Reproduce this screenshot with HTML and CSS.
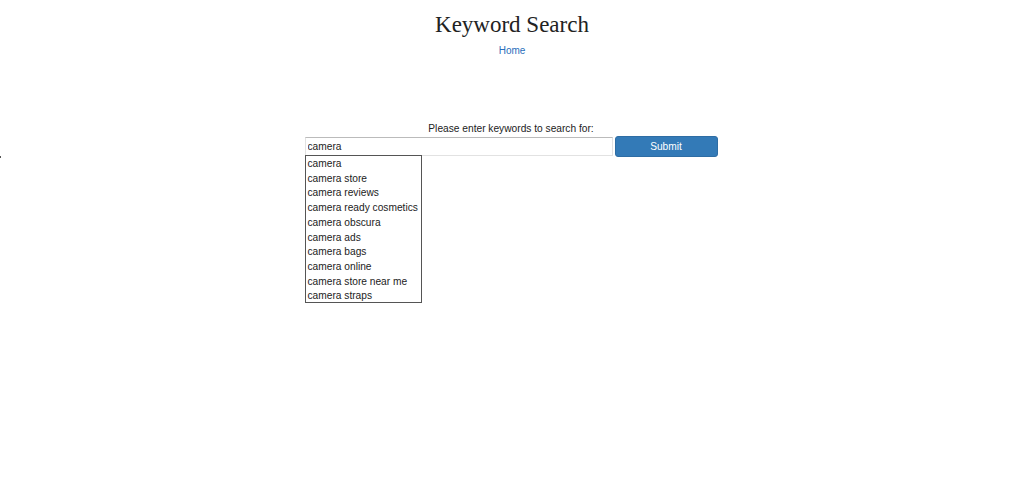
FILE: index.html
```html
<!DOCTYPE html>
<html>
<head>
<meta charset="utf-8">
<link rel="stylesheet" href="styles.css">
</head>
<body>
<span class="dot"></span>
<header class="head">
  <h1 class="title">Keyword Search</h1>
  <a class="home" href="#">Home</a>
</header>
<main class="search">
  <label class="label" for="kw">Please enter keywords to search for:</label>
  <div class="row">
    <div class="field">
      <input id="kw" class="input" type="text" value="camera">
      <div class="suggest">
        <div class="item">camera</div>
        <div class="item">camera store</div>
        <div class="item">camera reviews</div>
        <div class="item">camera ready cosmetics</div>
        <div class="item">camera obscura</div>
        <div class="item">camera ads</div>
        <div class="item">camera bags</div>
        <div class="item">camera online</div>
        <div class="item">camera store near me</div>
        <div class="item">camera straps</div>
      </div>
    </div>
    <button class="submit" type="button">Submit</button>
  </div>
</main>
</body>
</html>
```
FILE: styles.css
```css
html, body {
  margin: 0;
  padding: 0;
  background: #fff;
}
body {
  font-family: "Liberation Sans", Arial, sans-serif;
  color: #222;
  position: relative;
}
.dot {
  position: absolute;
  left: 0;
  top: 156px;
  width: 1px;
  height: 2px;
  background: #555;
}
.head {
  display: flex;
  flex-direction: column;
  align-items: center;
  padding-top: 11px;
}
.title {
  margin: 0;
  font-family: "Liberation Serif", "Times New Roman", serif;
  font-weight: normal;
  font-size: 23px;
  line-height: 28px;
  color: #222;
}
.home {
  margin-top: 5px;
  font-size: 10px;
  line-height: 14px;
  color: #2a6ebb;
  text-decoration: none;
}
.search {
  display: flex;
  flex-direction: column;
  align-items: center;
  padding-top: 64px;
  padding-right: 2px;
}
.label {
  font-size: 10.2px;
  line-height: 14px;
  color: #222;
  margin-bottom: 0;
}
.row {
  display: flex;
  align-items: flex-start;
  gap: 2px;
}
.field {
  display: flex;
  flex-direction: column;
  width: 308px;
}
.input {
  box-sizing: border-box;
  width: 308px;
  height: 19px;
  margin: 1px 0 0;
  padding: 0 2px;
  border: 1px solid #e2e2e2;
  border-top-color: #bbb;
  font-family: "Liberation Sans", Arial, sans-serif;
  font-size: 10.2px;
  color: #222;
  outline: none;
}
.suggest {
  margin-top: -1px;
  padding: 1px 0 0;
  box-sizing: border-box;
  width: 117px;
  height: 148px;
  overflow: hidden;
  border: 1px solid #555;
  background: #fff;
}
.item {
  font-size: 10.2px;
  line-height: 14.7px;
  padding-left: 2px;
  color: #222;
  white-space: nowrap;
}
.submit {
  width: 103px;
  height: 21px;
  border: 1px solid #2e6da4;
  border-radius: 3px;
  background: #337ab7;
  color: #fff;
  font-family: "Liberation Sans", Arial, sans-serif;
  font-size: 10.2px;
  padding: 0;
}
```
